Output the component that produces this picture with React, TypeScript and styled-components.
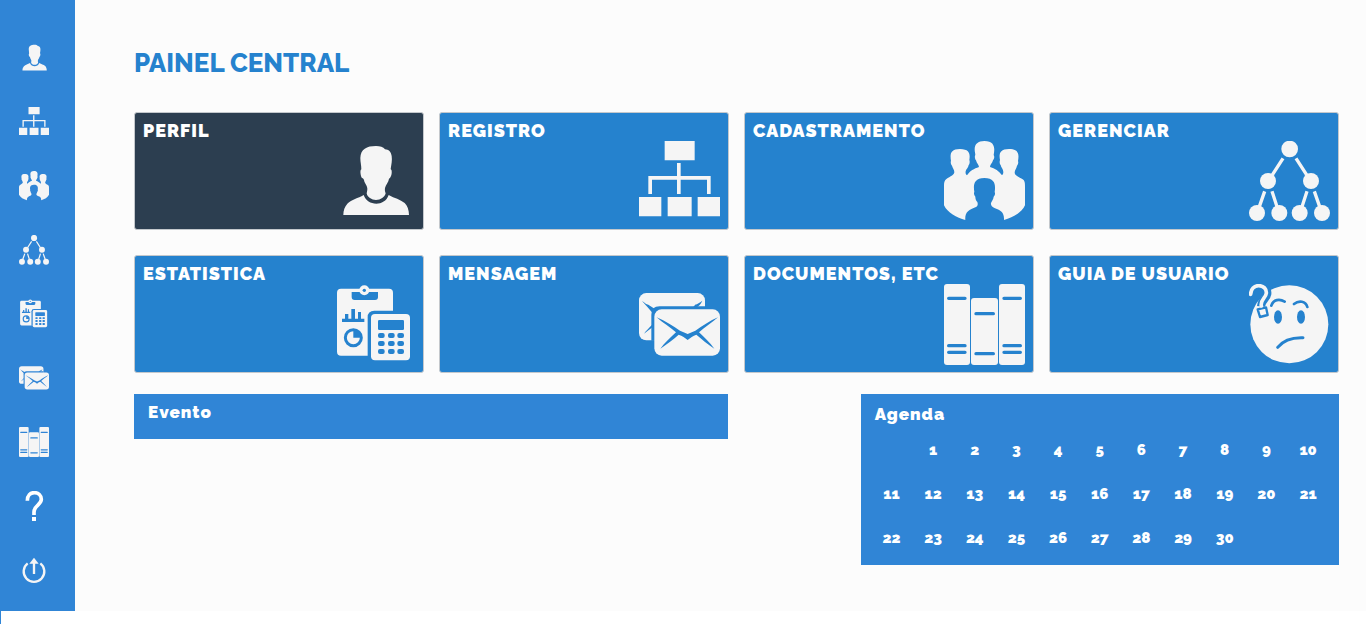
import React from "react";
import styled, { createGlobalStyle } from "styled-components";

const BAR = "#3085d6";
const CARD = "#2582ce";
const DARK = "#2c3e50";
const INK = "#f5f5f5";

const GlobalStyle = createGlobalStyle`
  *, *::before, *::after { box-sizing: border-box; }
  body {
    margin: 0;
    background: #fff;
    font-family: Raleway, Lato, "Open Sans", sans-serif;
  }
`;

const Page = styled.div`
  display: flex;
  flex-direction: column;
  min-height: 100vh;
`;

const Shell = styled.div`
  display: flex;
  background: #fcfcfc;
`;

const Tail = styled.div`
  flex: 1;
  border-left: 1px solid ${BAR};
`;

const Sidebar = styled.nav`
  flex: none;
  display: flex;
  flex-direction: column;
  gap: 34px;
  width: 75px;
  padding: 43px 0 26px 19px;
  background: ${BAR};
  color: ${BAR};
`;

const SideLink = styled.a`
  display: block;
  width: 30px;
  height: 30px;
  color: inherit;
`;

const Main = styled.main`
  flex: 1;
  min-width: 0;
  padding: 47px 27px 46px 59px;
`;

const Heading = styled.h1`
  margin: 0 0 33px;
  font-size: 26px;
  line-height: 32px;
  font-weight: 800;
  color: ${CARD};
`;

const CardGrid = styled.div`
  display: grid;
  grid-template-columns: repeat(4, 1fr);
  gap: 25px 15px;
`;

const Card = styled.a<{ $active?: boolean }>`
  display: flex;
  flex-direction: column;
  padding: 8px 8px 7px;
  border: 1px solid #c4c8cc;
  border-radius: 3px;
  background: ${(p) => (p.$active ? DARK : CARD)};
  color: ${(p) => (p.$active ? DARK : CARD)};
  text-decoration: none;
`;

const CardTitle = styled.span`
  font-size: 18px;
  line-height: 20px;
  font-weight: 900;
  letter-spacing: 1px;
  white-space: nowrap;
  color: #fff;
`;

const CardIcon = styled.span`
  align-self: flex-end;
  width: 81px;
  height: 81px;
`;

const Glyph = styled.svg`
  display: block;
  width: 100%;
  height: 100%;
`;

const Panels = styled.div`
  display: flex;
  justify-content: space-between;
  align-items: flex-start;
  margin-top: 21px;
`;

const Panel = styled.section`
  background: ${BAR};
  color: #fff;
`;

const EventPanel = styled(Panel)`
  width: 49.3%;
  padding: 8px 10px 17px;
`;

const AgendaPanel = styled(Panel)`
  width: 39.7%;
  padding: 10px 10px 5px;
`;

const PanelTitle = styled.h2`
  margin: 0;
  padding: 0 4px;
  font-size: 17px;
  line-height: 20px;
  font-weight: 900;
  letter-spacing: 1px;
`;

const Calendar = styled.table`
  width: 100%;
  margin-top: 4px;
  table-layout: fixed;
  border-collapse: collapse;
  font-size: 15px;
  font-weight: 900;
`;

const Day = styled.td`
  height: 44px;
  padding: 0;
  text-align: center;
  vertical-align: middle;
`;

/* Shapes take INK for the figure and currentColor for the cut-outs. */
const PersonIcon = () => (
  <Glyph viewBox="642 123 243 243" fill={INK} aria-hidden="true">
    <path d="M768 138C740 138 722 147 721 174C721 186 724 196 724 208C720 210 721 222 724 231C726 236 731 234 732 240C734 252 742 256 742 266C742 272 741 274 740 280C742 292 755 300 768 300C782 300 794 292 797 280C795 274 794 270 795 264C797 254 806 246 807 236C813 233 816 222 815 213C815 210 813 209 812 207C814 195 817 180 815 168C813 155 806 149 795 148C790 141 780 138 768 138Z" />
    <path d="M731 285C714 295 695 298 682 311C674 320 670 331 670 345H867C867 330 862 317 854 309C840 298 824 295 806 285C800 303 784 311 769 311C752 311 737 302 731 285Z" />
  </Glyph>
);

const OrgIcon = () => (
  <Glyph viewBox="627 123 243 243" fill={INK} aria-hidden="true">
    <path d="M704 123h90v58h-90zM627 291h67v58h-67zM713 291h72v58h-72zM803 291h67v58h-67z" />
    <path d="M741 189h11v39h90v54h-11v-43h-79v43h-11v-43h-75v43h-11v-54h86z" />
  </Glyph>
);

const GroupIcon = () => (
  <Glyph viewBox="612 123 243 243" fill={INK} aria-hidden="true">
    <path d="M733 123C714 123 704 132 704 148C704 155 706 161 706 165C703 168 705 178 708 181C710 190 716 193 717 201C702 206 690 212 681 226C678 223 676 221 677 214C679 206 685 203 686 195C689 192 690 183 688 180C690 166 692 147 660 147C630 147 630 164 633 183C631 187 633 194 636 197C638 204 643 209 643 217C642 227 624 232 616 240C612 245 612 252 612 262V316C622 338 650 353 676 360C674 337 686 329 708 321C714 317 714 311 712 306C708 302 706 296 706 290C702 286 701 279 703 276C700 257 700 234 733 234C766 234 767 256 764 276C766 280 765 287 761 290C760 298 755 304 753 309C752 316 755 320 765 325C782 331 793 337 792 360C818 353 846 338 855 316V262C855 252 855 245 851 240C843 232 825 229 824 218C824 209 830 205 831 197C834 195 836 187 834 183C837 165 838 147 807 147C777 147 777 165 780 180C778 185 779 192 782 195C783 203 790 207 790 216C790 221 788 224 786 226C778 213 764 205 750 201C750 193 757 190 759 181C763 177 764 169 761 165C765 145 765 123 733 123Z" />
  </Glyph>
);

const TreeIcon = () => (
  <Glyph viewBox="627 123 243 243" fill={INK} aria-hidden="true">
    <path
      d="M729 175L696 226M768 175L801 226M674 274L658 320M696 274L711 320M801 274L786 320M823 274L839 320"
      stroke={INK}
      strokeWidth="10"
    />
    <circle cx="749" cy="147" r="25" />
    <circle cx="684" cy="243" r="24" />
    <circle cx="813" cy="243" r="24" />
    <circle cx="651" cy="339" r="24" />
    <circle cx="718" cy="339" r="24" />
    <circle cx="779" cy="339" r="24" />
    <circle cx="846" cy="339" r="24" />
  </Glyph>
);

const StatsIcon = () => (
  <Glyph viewBox="642 117 243 243" fill={INK} aria-hidden="true">
    <rect x="651" y="131" width="168" height="201" rx="12" />
    <path d="M695 141H774V156Q774 165 765 165H704Q695 165 695 156Z" fill="currentColor" />
    <circle cx="733" cy="136" r="15" />
    <circle cx="733" cy="136" r="5" fill="currentColor" />
    <path d="M666 221h9v-14h10v14h9v-29h11v29h9v-20h9v20h10v10h-67z" fill="currentColor" />
    <circle cx="700" cy="278" r="24" fill="none" stroke="currentColor" strokeWidth="9" />
    <path d="M700 254V278H724A24 24 0 0 0 700 254Z" fill="currentColor" />
    <path d="M743 334V217Q743 197 763 197H821V334Z" fill="currentColor" />
    <rect x="753" y="207" width="117" height="139" rx="12" />
    <g fill="currentColor">
      <rect x="774" y="225" width="78" height="30" rx="4" />
      {[264, 288, 312].map((y) =>
        [774, 804, 832].map((x) => <rect key={`${x}-${y}`} x={x} y={y} width="20" height="15" rx="6" />)
      )}
    </g>
  </Glyph>
);

const MailIcon = () => (
  <Glyph viewBox="627 117 243 243" fill={INK} aria-hidden="true">
    <rect x="627" y="144" width="198" height="142" rx="22" />
    <path
      d="M636 168C645 174 648 178 655 179L690 202L668 218V246L642 266C648 257 656 251 668 238V204C658 192 645 178 636 168ZM817 167C812 179 804 185 796 190H785C790 186 793 183 795 179C803 177 808 173 817 167Z"
      fill="currentColor"
    />
    <path d="M664 287V209Q664 184 689 184H826V287Z" fill="currentColor" />
    <rect x="673" y="193" width="197" height="139" rx="22" />
    <path
      d="M680 217C706 228 731 245 750 257L773 267L796 257C817 243 840 227 864 217C847 232 824 247 807 262C824 279 840 292 853 311C833 297 814 282 799 269C789 272 781 278 773 285C765 278 757 272 746 269C731 282 711 298 691 311C704 292 721 279 738 262C720 247 698 233 680 217Z"
      fill="currentColor"
    />
  </Glyph>
);

const BooksIcon = () => (
  <Glyph viewBox="612 117 243 243" fill={INK} aria-hidden="true">
    <rect x="612" y="117" width="78" height="243" rx="9" />
    <rect x="693" y="159" width="81" height="201" rx="9" />
    <rect x="777" y="117" width="78" height="243" rx="9" />
    <path
      d="M626 160H675M626 302H675M626 322H675M708 206H760M708 326H760M792 160H841M792 302H841M792 322H841"
      stroke="currentColor"
      strokeWidth="10"
      strokeLinecap="round"
    />
  </Glyph>
);

const ThinkingIcon = () => (
  <Glyph viewBox="627 117 243 243" fill="none" strokeLinecap="round" aria-hidden="true">
    <circle cx="748" cy="238" r="117" fill={INK} />
    <path
      d="M633 149C631 132 643 122 656 122C672 122 684 132 682 147C680 162 665 163 663 184"
      stroke="currentColor"
      strokeWidth="24"
      strokeLinecap="butt"
    />
    <path
      d="M653 193L678 187L683 210L660 216Z"
      fill={INK}
      stroke="currentColor"
      strokeWidth="7"
      strokeLinejoin="round"
    />
    <path
      d="M632 148C632 132 643 122 656 122C671 122 680 132 679 145C677 160 660 165 664 183"
      stroke={INK}
      strokeWidth="11"
    />
    <g stroke="currentColor" strokeWidth="8">
      <path d="M694 182C700 163 719 161 734 170M762 177C777 165 797 168 802 186" />
      <path d="M713 307C732 283 760 277 789 278" strokeWidth="9" />
    </g>
    <ellipse cx="714" cy="216" rx="12" ry="20" fill="currentColor" />
    <ellipse cx="783" cy="216" rx="12" ry="20" fill="currentColor" />
  </Glyph>
);

const QuestionIcon = () => (
  <Glyph viewBox="57 243 90 90" fill="none" aria-hidden="true">
    <path
      d="M82 272C82 256 91 248 103 248C115 248 124 256 124 268C124 285 102 286 102 306V315"
      stroke="#fff"
      strokeWidth="11"
    />
    <path d="M96 321h12v12h-12z" fill="#fff" />
  </Glyph>
);

const ExitIcon = () => (
  <Glyph viewBox="57 435 90 90" fill="none" aria-hidden="true">
    <path d="M83 460A31 31 0 1 0 121 460" stroke={INK} strokeWidth="7" />
    <path d="M102 492V458" stroke={INK} strokeWidth="7" />
    <path d="M102 443L116 461H88Z" fill={INK} />
  </Glyph>
);

const sections = [
  { title: "PERFIL", Icon: PersonIcon, href: "#perfil" },
  { title: "REGISTRO", Icon: OrgIcon, href: "#registro" },
  { title: "CADASTRAMENTO", Icon: GroupIcon, href: "#cadastramento" },
  { title: "GERENCIAR", Icon: TreeIcon, href: "#gerenciar" },
  { title: "ESTATISTICA", Icon: StatsIcon, href: "#estatistica" },
  { title: "MENSAGEM", Icon: MailIcon, href: "#mensagem" },
  { title: "DOCUMENTOS, ETC", Icon: BooksIcon, href: "#documentos" },
  { title: "GUIA DE USUARIO", Icon: ThinkingIcon, href: "#guia" },
];

const sideLinks = [
  ...sections.slice(0, 7),
  { title: "GUIA DE USUARIO", Icon: QuestionIcon, href: "#guia" },
  { title: "SAIR", Icon: ExitIcon, href: "#sair" },
];

const COLUMNS = 11;
const weeks = [0, 1, 2].map((row) =>
  Array.from({ length: COLUMNS }, (_, col) => row * COLUMNS + col).map((day) =>
    day >= 1 && day <= 30 ? day : null
  )
);

export default function App() {
  return (
    <Page>
      <GlobalStyle />
      <Shell>
        <Sidebar>
          {sideLinks.map(({ title, Icon, href }) => (
            <SideLink key={title} href={href} aria-label={title}>
              <Icon />
            </SideLink>
          ))}
        </Sidebar>
        <Main>
          <Heading>PAINEL CENTRAL</Heading>
          <CardGrid>
            {sections.map(({ title, Icon, href }, i) => (
              <Card key={title} href={href} $active={i === 0}>
                <CardTitle>{title}</CardTitle>
                <CardIcon>
                  <Icon />
                </CardIcon>
              </Card>
            ))}
          </CardGrid>
          <Panels>
            <EventPanel>
              <PanelTitle>Evento</PanelTitle>
            </EventPanel>
            <AgendaPanel>
              <PanelTitle>Agenda</PanelTitle>
              <Calendar>
                <tbody>
                  {weeks.map((week, r) => (
                    <tr key={r}>
                      {week.map((day, c) => (
                        <Day key={c}>{day}</Day>
                      ))}
                    </tr>
                  ))}
                </tbody>
              </Calendar>
            </AgendaPanel>
          </Panels>
        </Main>
      </Shell>
      <Tail />
    </Page>
  );
}
